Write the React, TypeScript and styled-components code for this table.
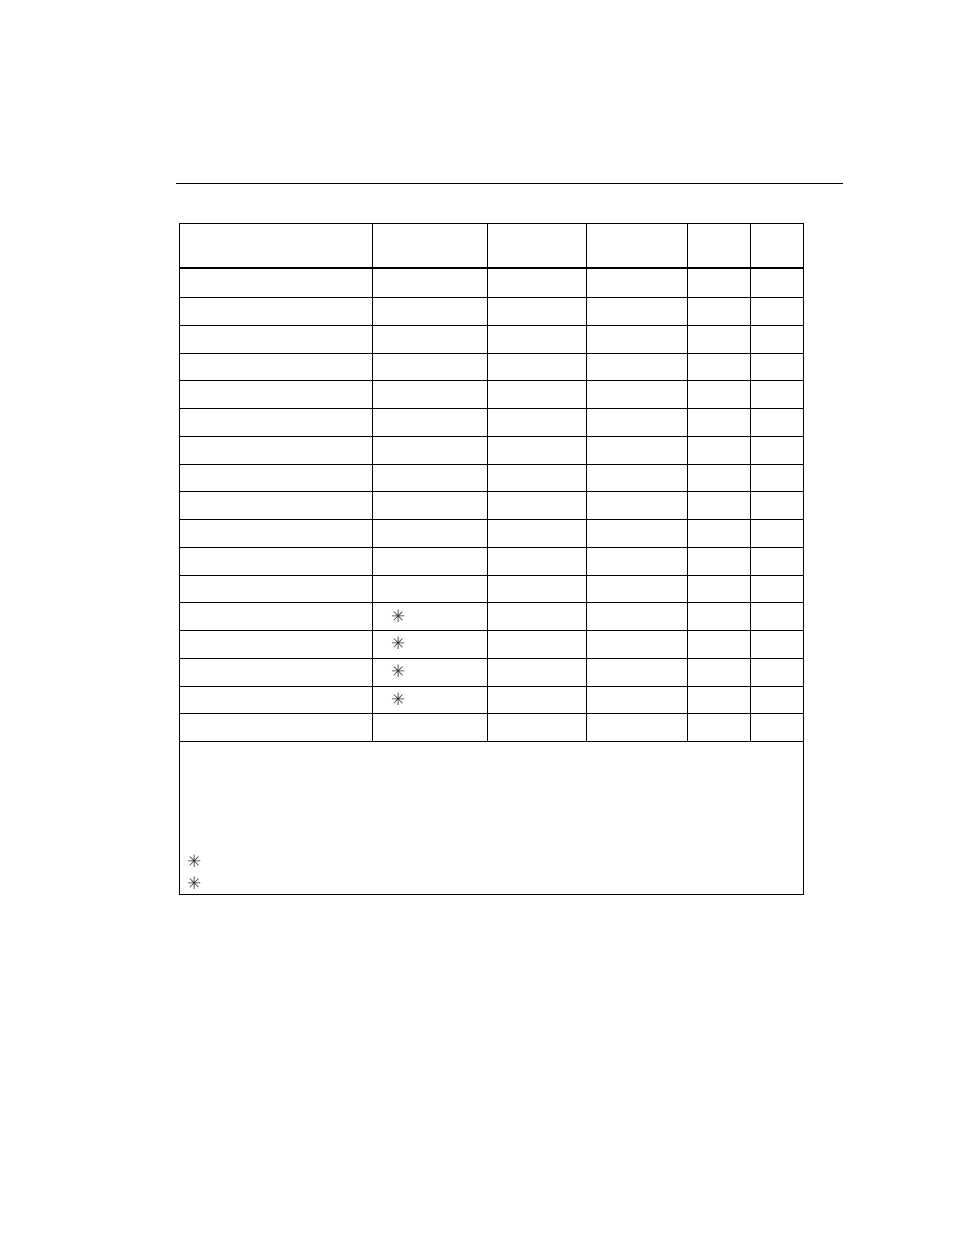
import React from "react";
import styled, { createGlobalStyle } from "styled-components";

const Global = createGlobalStyle`
  html, body { margin: 0; padding: 0; background: #fff; }
  body { font-family: "Liberation Serif", "Times New Roman", serif; color: #000; }
`;

const Page = styled.div`
  width: 954px;
  height: 1235px;
  padding-top: 183px;
  box-sizing: border-box;
`;

const Rule = styled.div`
  margin-left: 176px;
  width: 667px;
  height: 1px;
  background: #000;
`;

const Grid = styled.div`
  margin-top: 39px;
  margin-left: 179px;
  width: 625px;
  display: grid;
  grid-template-columns: 193px 115px 99px 101px 63px 53px;
  grid-template-rows: 45px 29px repeat(16, 27.75px) 153px;
  border-top: 1px solid #000;
  border-left: 1px solid #000;
  box-sizing: border-box;
`;

const Cell = styled.div<{ $head?: boolean }>`
  border-right: 1px solid #000;
  border-bottom: ${(p) => (p.$head ? "2px" : "1px")} solid #000;
  box-sizing: border-box;
  display: flex;
  align-items: center;
  padding-left: 18px;
  padding-bottom: 2px;
`;

const Footer = styled.div`
  grid-column: 1 / -1;
  border-right: 1px solid #000;
  border-bottom: 1px solid #000;
  box-sizing: border-box;
  display: flex;
  flex-direction: column;
  justify-content: flex-end;
  padding: 0 0 0 7px;
`;

const Mark = styled.span`
  display: inline-block;
  font-family: "DejaVu Sans";
  font-size: 17px;
  line-height: 22px;
  color: #333;
  font-variant-emoji: text;
  opacity: 0.99;
  will-change: transform;
`;

const STAR = "\u2733\uFE0E";

const cols = 6;
const bodyRows = 17;
const starRows = [12, 13, 14, 15];

export default function App() {
  const cells: React.ReactNode[] = [];
  for (let c = 0; c < cols; c++) cells.push(<Cell key={`h${c}`} $head />);
  for (let r = 0; r < bodyRows; r++) {
    for (let c = 0; c < cols; c++) {
      cells.push(
        <Cell key={`r${r}c${c}`}>
          {c === 1 && starRows.includes(r) ? <Mark>{STAR}</Mark> : null}
        </Cell>
      );
    }
  }
  return (
    <>
      <Global />
      <Page>
        <Rule />
        <Grid>
          {cells}
          <Footer>
            <Mark>{STAR}</Mark>
            <Mark>{STAR}</Mark>
          </Footer>
        </Grid>
      </Page>
    </>
  );
}
